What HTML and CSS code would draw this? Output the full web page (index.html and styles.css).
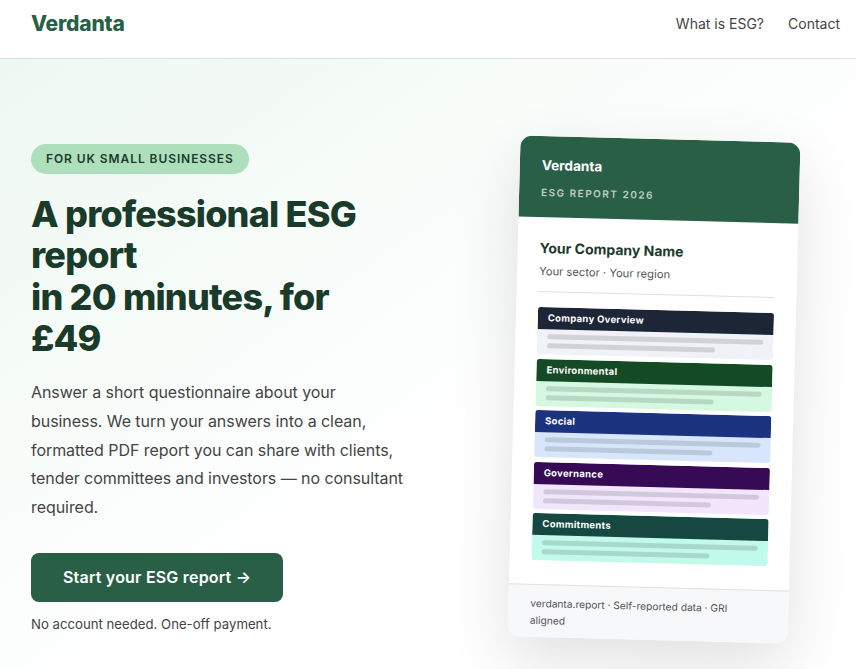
FILE: index.html
```html
<!DOCTYPE html>
<html lang="en">
<head>
    <meta charset="UTF-8">
    <meta name="viewport" content="width=device-width, initial-scale=1.0">
    <title>Verdanta</title>
    <link rel="stylesheet" href="styles.css">
</head>

<body>
    <nav class="nav">
        <a href="#" class="logo">Verdanta</a>
        <div class="nav-links">
            <a href="#">What is ESG?</a>
            <a href="#">Contact</a>
        </div>
    </nav>

    <section class="hero">
        <div class="hero-text">
            <span class="badge">FOR UK SMALL BUSINESSES</span>
            <h1>A professional ESG report<br>in 20 minutes, for £49</h1>
            <p class="lead">Answer a short questionnaire about your business. We turn your answers into a clean, formatted PDF report you can share with clients, tender committees and investors — no consultant required.</p>
            <a href="#" class="btn">Start your ESG report →</a>
            <p class="note">No account needed. One-off payment.</p>
        </div>

        <div class="report">
            <div class="report-head">
                <div class="report-brand">Verdanta</div>
                <div class="report-year">ESG REPORT 2026</div>
            </div>
            <div class="report-body">
                <div class="company">Your Company Name</div>
                <div class="sector">Your sector · Your region</div>
                <div class="sections">
                    <div class="section overview">
                        <div class="section-title">Company Overview</div>
                        <div class="section-lines"><i></i><i></i></div>
                    </div>
                    <div class="section environmental">
                        <div class="section-title">Environmental</div>
                        <div class="section-lines"><i></i><i></i></div>
                    </div>
                    <div class="section social">
                        <div class="section-title">Social</div>
                        <div class="section-lines"><i></i><i></i></div>
                    </div>
                    <div class="section governance">
                        <div class="section-title">Governance</div>
                        <div class="section-lines"><i></i><i></i></div>
                    </div>
                    <div class="section commitments">
                        <div class="section-title">Commitments</div>
                        <div class="section-lines"><i></i><i></i></div>
                    </div>
                </div>
            </div>
            <div class="report-foot">verdanta.report · Self-reported data · GRI aligned</div>
        </div>
    </section>
</body>
</html>
```

FILE: styles.css
```css
* {
    box-sizing: border-box;
}

body {
    font-family: 'Inter', sans-serif;
    margin: 0;
    background: white;
    color: #1a3a2a;
    overflow-x: hidden;
}

a {
    text-decoration: none;
}

.nav {
    display: flex;
    justify-content: space-between;
    align-items: center;
    height: 59px;
    padding: 0 16px 12px 31px;
    border-bottom: 1px solid #e0e0e0;
    background: white;
}

.logo {
    font-size: 21px;
    font-weight: 800;
    color: #2a5f47;
    letter-spacing: -0.2px;
}

.nav-links {
    display: flex;
    gap: 24px;
}

.nav-links a {
    font-size: 14px;
    color: #444;
}

.hero {
    display: flex;
    justify-content: space-between;
    align-items: center;
    padding: 80px 62px 30px 31px;
    background: linear-gradient(145deg, #eef8f2 0%, #ffffff 60%);
}

.hero-text {
    width: 378px;
    padding-bottom: 3px;
}

.badge {
    display: inline-block;
    background: #aedfbd;
    color: #1a3a2a;
    font-size: 12px;
    line-height: 16px;
    font-weight: 600;
    letter-spacing: 0.92px;
    padding: 7px 15px;
    border-radius: 20px;
}

h1 {
    max-width: 360px;
    font-size: 36px;
    font-weight: 800;
    line-height: 1.15;
    letter-spacing: -0.8px;
    color: #1a3a2a;
    margin: 20px 0 19px;
}

.lead {
    font-size: 16px;
    line-height: 1.785;
    letter-spacing: -0.06px;
    color: #444;
    margin: 0 0 32px;
}

.btn {
    display: inline-block;
    background: #2a5f47;
    color: white;
    font-size: 16px;
    line-height: 19px;
    font-weight: 600;
    letter-spacing: 0.2px;
    padding: 15px 32px;
    border-radius: 8px;
}

.note {
    font-size: 13.2px;
    color: #444;
    margin: 14px 0 0;
}

.report {
    width: 280px;
    flex-shrink: 0;
    background: white;
    border-radius: 12px;
    overflow: hidden;
    transform: rotate(1.5deg);
    box-shadow: 0 24px 64px rgba(0, 0, 0, 0.12);
}

.report-head {
    background: #2a5f47;
    padding: 21px 22px 19px;
}

.report-brand {
    font-size: 13.6px;
    font-weight: 700;
    color: white;
    margin-bottom: 13px;
}

.report-year {
    font-size: 10px;
    font-weight: 600;
    letter-spacing: 1.5px;
    color: rgba(255, 255, 255, 0.7);
}

.report-body {
    padding: 22px 22px 24px;
}

.company {
    font-size: 14px;
    font-weight: 700;
    color: #1a3a2a;
    margin-bottom: 8px;
}

.sector {
    font-size: 11.2px;
    color: #555;
    padding-bottom: 13px;
    border-bottom: 1px solid #e0e0e0;
    margin-bottom: 15px;
}

.sections {
    display: flex;
    flex-direction: column;
    gap: 4.5px;
}

.section {
    border-radius: 3px;
    overflow: hidden;
}

.section-title {
    font-size: 9.5px;
    font-weight: 700;
    letter-spacing: 0.3px;
    color: white;
    padding: 5px 10px;
    height: 22px;
}

.section-lines {
    display: flex;
    flex-direction: column;
    gap: 4px;
    padding: 5px 10px 6px;
}

.section-lines i {
    display: block;
    height: 5px;
    border-radius: 3px;
    background: rgba(0, 0, 0, 0.13);
}

.section-lines i:last-child {
    width: 78%;
}

.overview { background: #f0f2f7; }
.overview .section-title { background: #1c2637; }
.environmental { background: #d4f9e0; }
.environmental .section-title { background: #144a25; }
.social { background: #d8e6fc; }
.social .section-title { background: #1c3380; }
.governance { background: #f2e6fd; }
.governance .section-title { background: #360a54; }
.commitments { background: #c1f9ea; }
.commitments .section-title { background: #164740; }

.report-foot {
    background: #f7f8fa;
    border-top: 1px solid #e0e0e0;
    padding: 9.5px 30px 8.5px 22px;
    font-size: 10.2px;
    line-height: 17px;
    color: #555;
}
```
